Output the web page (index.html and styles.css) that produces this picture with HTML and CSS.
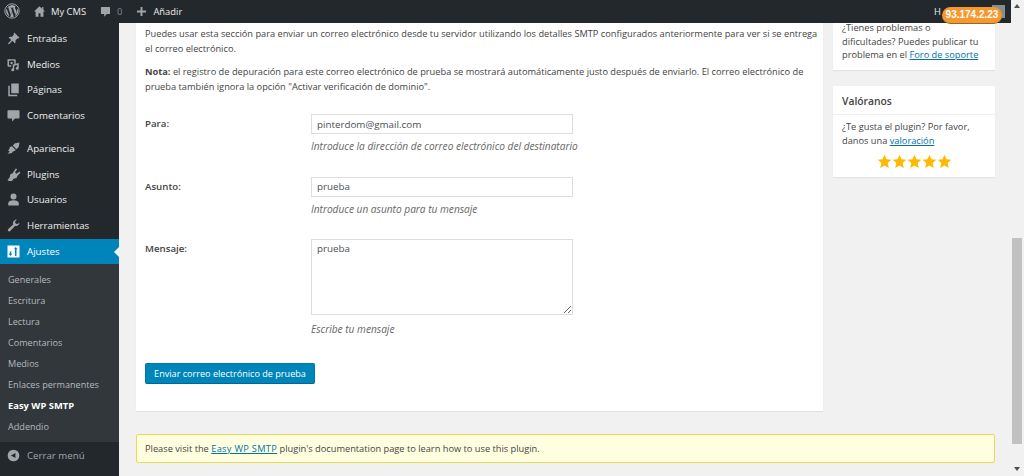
FILE: index.html
```html
<!DOCTYPE html>
<html lang="es">
<head>
<meta charset="utf-8">
<title>Easy WP SMTP</title>
<link rel="stylesheet" href="styles.css">
</head>
<body>
<div class="app">
  <header class="topbar">
    <div class="tb-item tb-wp"><svg class="wp" viewBox="0 0 20 20"><circle cx="10" cy="10" r="9" fill="none" stroke="currentColor" stroke-width="1.2"/><path fill="currentColor" d="M2.6 10c0 2.9 1.7 5.5 4.2 6.7L3.2 7a7.4 7.4 0 0 0-.6 3zm12.4-.4c0-.9-.3-1.6-.6-2.1-.4-.6-.7-1.100-.7-1.700 0-.7.5-1.300 1.200-1.300h.1A7.400 7.400 0 0 0 3.900 5.900h.5c.8 0 2-.1 2-.1.400 0 .5.600.1.600 0 0-.4.100-.9.100l2.800 8.300 1.700-5-1.200-3.300c-.4 0-.8-.1-.8-.1-.4 0-.4-.6 0-.6 0 0 1.300.1 2 .1.800 0 2-.1 2-.1.400 0 .5.600.1.600 0 0-.4.100-.9.100l2.800 8.200.8-2.600c.3-1.100.6-1.900.6-2.600zM10.100 10.700l-2.300 6.700a7.400 7.400 0 0 0 4.500-.1l-.1-.1zm6.500-4.300c0 .3.100.6.100.9 0 .8-.1 1.600-.6 2.800l-2.300 6.700a7.400 7.400 0 0 0 2.800-10.400z"/></svg></div>
    <div class="tb-item"><svg class="tb-icon" viewBox="0 0 20 20"><path fill="currentColor" d="M10 2 1.500 10H4v8h4.500v-5.500h3V18H16v-8h2.500L16 7.600V3h-2v2.700z"/></svg><span>My CMS</span></div>
    <div class="tb-item tb-dim"><svg class="tb-icon" viewBox="0 0 20 20"><path fill="currentColor" d="M4 3h12a1 1 0 0 1 1 1v9a1 1 0 0 1-1 1h-4l-4 4v-4H4a1 1 0 0 1-1-1V4a1 1 0 0 1 1-1z"/></svg><span>0</span></div>
    <div class="tb-item"><svg class="tb-icon" viewBox="0 0 20 20"><path fill="currentColor" d="M8.500 3h3v5.500H17v3h-5.500V17h-3v-5.500H3v-3h5.500z"/></svg><span>Añadir</span></div>
    <div class="tb-right"><span>H</span><span class="avatar"></span></div>
    <span class="ip-badge">93.174.2.23</span>
  </header>

  <nav class="sidebar">
    <ul class="menu">
      <li><svg viewBox="0 0 20 20"><path d="M11 2l7 7-1.500 1-1-.500-3 3c.5 1.500.2 3-.5 4L8.500 13 4 17.500 3 17l-.500-.500L7 12 3.500 8.500c1-.7 2.500-1 4-.5l3-3-.5-1z"/></svg>Entradas</li>
      <li><svg viewBox="0 0 20 20"><path d="M2 3h10l1 1v5h-2V5H9L8 3.500 7 5H4v6h3v2H3l-1-1zm7 7 8-2v7a2 2 0 1 1-2-2V10.500l-4 1V17a2 2 0 1 1-2-2z"/><circle cx="7.500" cy="8" r="1.600"/></svg>Medios</li>
      <li><svg viewBox="0 0 20 20"><path d="M7 2h10v13H7zM5 5v12h10v2H3V5z"/></svg>Páginas</li>
      <li class="sep-after"><svg viewBox="0 0 20 20"><path d="M3 3h14a1 1 0 0 1 1 1v9a1 1 0 0 1-1 1h-5l-4 4v-4H3a1 1 0 0 1-1-1V4a1 1 0 0 1 1-1z"/></svg>Comentarios</li>
      <li><svg viewBox="0 0 20 20"><path d="M12 3l6-1-1 6-3 3-5-5zM8 7l5 5-1 1c-1 0-2 1-3 1l-1 2-6 1 3-3-2-1 1-2c1-1 1-2 1-3z"/></svg>Apariencia</li>
      <li><svg viewBox="0 0 20 20"><path d="M13 2l2 1-3 4 2 2 4-3 1 2-4 4c0 2-1 3-2 3l-3 .500-2 3H4l-2-1 3-4 .5-3c0-1 1-2 3-2z"/></svg>Plugins</li>
      <li><svg viewBox="0 0 20 20"><circle cx="10" cy="6" r="4"/><path d="M3 18v-3c0-2.500 3-4 7-4s7 1.500 7 4v3z"/></svg>Usuarios</li>
      <li><svg viewBox="0 0 20 20"><path d="M18 6c0 3-3 5.500-6 4.500L6 17c-1 1.500-3 1-3.500-.5-.3-.8 0-1.500.5-2l6.500-6C8.500 5.500 11 2 14.500 2L12 5l1 2.500 2.500.5z"/></svg>Herramientas</li>
      <li class="active"><svg viewBox="0 0 20 20"><path fill-rule="evenodd" d="M2 2h16v16H2zm3 8v3H3.500L6 16l2.500-3H7v-3zm8-6-2.500 3H12v9h2V7h1.500z"/></svg>Ajustes</li>
    </ul>
    <ul class="submenu">
      <li>Generales</li>
      <li>Escritura</li>
      <li>Lectura</li>
      <li>Comentarios</li>
      <li>Medios</li>
      <li>Enlaces permanentes</li>
      <li class="current">Easy WP SMTP</li>
      <li>Addendio</li>
    </ul>
    <div class="collapse"><svg viewBox="0 0 20 20"><path fill-rule="evenodd" d="M10 1a9 9 0 1 1 0 18 9 9 0 0 1 0-18zm3 5-7 4 7 4z"/></svg>Cerrar menú</div>
  </nav>

  <main class="content">
    <div class="columns">
      <section class="panel">
        <p>Puedes usar esta sección para enviar un correo electrónico desde tu servidor utilizando los detalles SMTP configurados anteriormente para ver si se entrega el correo electrónico.</p>
        <p><strong>Nota:</strong> el registro de depuración para este correo electrónico de prueba se mostrará automáticamente justo después de enviarlo. El correo electrónico de prueba también ignora la opción "Activar verificación de dominio".</p>
        <form class="form">
          <div class="row">
            <label class="label">Para:</label>
            <div class="field"><input class="input" type="text" value="pinterdom@gmail.com"><p class="hint">Introduce la dirección de correo electrónico del destinatario</p></div>
          </div>
          <div class="row">
            <label class="label">Asunto:</label>
            <div class="field"><input class="input" type="text" value="prueba"><p class="hint">Introduce un asunto para tu mensaje</p></div>
          </div>
          <div class="row">
            <label class="label">Mensaje:</label>
            <div class="field"><textarea class="textarea">prueba</textarea><p class="hint">Escribe tu mensaje</p></div>
          </div>
          <button class="btn" type="button">Enviar correo electrónico de prueba</button>
        </form>
      </section>
      <aside class="aside">
        <div class="box box-support">¿Tienes problemas o dificultades? Puedes publicar tu problema en el <a href="#">Foro de soporte</a></div>
        <div class="box box-rate">
          <h3>Valóranos</h3>
          <div class="box-body">¿Te gusta el plugin? Por favor, danos una <a href="#">valoración</a>
            <div class="stars"><svg viewBox="0 0 20 20"><path d="M10 1l2.700 6 6.300.7-4.700 4.300 1.300 6.500L10 15.200 4.400 18.500 5.700 12 1 7.700 7.300 7z"/></svg><svg viewBox="0 0 20 20"><path d="M10 1l2.700 6 6.300.7-4.700 4.300 1.300 6.500L10 15.200 4.400 18.500 5.700 12 1 7.700 7.300 7z"/></svg><svg viewBox="0 0 20 20"><path d="M10 1l2.700 6 6.300.7-4.700 4.300 1.300 6.500L10 15.200 4.400 18.500 5.700 12 1 7.700 7.300 7z"/></svg><svg viewBox="0 0 20 20"><path d="M10 1l2.700 6 6.300.7-4.700 4.300 1.300 6.500L10 15.200 4.400 18.500 5.700 12 1 7.700 7.300 7z"/></svg><svg viewBox="0 0 20 20"><path d="M10 1l2.700 6 6.300.7-4.700 4.300 1.300 6.500L10 15.200 4.400 18.500 5.700 12 1 7.700 7.300 7z"/></svg></div>
          </div>
        </div>
      </aside>
    </div>
    <div class="notice">Please visit the <a href="#">Easy WP SMTP</a> plugin's documentation page to learn how to use this plugin.</div>
  </main>

  <div class="scrollbar"><span class="arrow"></span><span class="thumb"></span><span class="arrow-down"></span></div>
</div>
</body>
</html>
```

FILE: styles.css
```css
* { box-sizing: border-box; }
html, body { margin: 0; padding: 0; height: 476px; overflow: hidden; }
body { font-family: "Open Sans", sans-serif; font-size: 10px; color: #444; background: #f1f1f1; }
ul { list-style: none; margin: 0; padding: 0; }
a { color: #0073aa; text-decoration: underline; }

.app { display: grid; grid-template-columns: 119px 1fr 13px; grid-template-rows: 23px 453px; width: 1024px; height: 476px; position: relative; }

.topbar { grid-column: 1 / 3; display: flex; align-items: center; background: #23282d; color: #eee; font-size: 9.4px; height: 23px; position: relative; z-index: 2; padding-left: 4px; padding-bottom: 1px; }
.tb-item { display: flex; align-items: center; gap: 5px; margin-right: 13px; }
.tb-wp { margin-right: 13px; }
.wp { width: 16px; height: 16px; color: #a0a5aa; }
.tb-icon { width: 13px; height: 13px; color: #a0a5aa; }
.tb-dim span { color: #82878c; }
.tb-right { margin-left: auto; display: flex; align-items: center; gap: 2px; padding-right: 6px; }
.avatar { width: 13px; height: 13px; background: #8a8d90; display: block; margin-left: 49px; }
.ip-badge { position: absolute; top: 7px; left: 942px; width: 60px; height: 17px; border-radius: 9px; background: #f6982d; color: #fff; font-family: "Liberation Sans", sans-serif; font-weight: 700; font-size: 10px; line-height: 16px; text-align: center; border-bottom: 1px solid #8a6a35; }

.sidebar { grid-column: 1; grid-row: 2; background: #23282d; color: #eee; font-size: 9.7px; display: flex; flex-direction: column; }
.menu { padding-top: 2.500px; }
.menu li { display: flex; align-items: center; height: 25.700px; padding-left: 6px; position: relative; }
.menu li.sep-after { margin-bottom: 7.500px; }
.menu svg { width: 15px; height: 15px; margin-right: 6px; fill: #a0a5aa; flex: none; }
.menu li.active { background: #0085ba; color: #fff; }
.menu li.active svg { fill: #fff; }
.menu li.active::after { content: ""; position: absolute; right: 0; top: 8px; border: 5px solid transparent; border-right-color: #f1f1f1; border-left: 0; }
.submenu { background: #32373c; padding: 5px 0 0; flex: 1; color: #b4b9be; font-size: 9.100px; }
.submenu li { height: 21px; line-height: 21px; padding-left: 8px; }
.submenu li.current { color: #fff; font-weight: 700; font-size: 9.400px; }
.collapse { display: flex; align-items: center; height: 34px; padding: 0 0 8px 7px; color: #a0a5aa; background: #23282d; }
.collapse svg { width: 13px; height: 13px; margin-right: 7px; fill: #a0a5aa; }

.content { grid-column: 2; grid-row: 2; padding: 0 16px 0 17px; min-width: 0; }
.columns { display: flex; gap: 10px; align-items: flex-start; }
.panel { width: 687px; height: 388px; background: #fff; box-shadow: 0 1px 1px rgba(0,0,0,.06); padding: 3px 2px 0 9px; font-size: 9.250px; line-height: 15px; }
.panel > p { margin: 0 0 8px; }
.form { margin-top: 20px; }
.row { display: flex; margin-bottom: 22.500px; font-size: 9.700px; }
.label { width: 166px; font-weight: 600; padding-top: 2px; }
.field { width: 470px; }
.input { display: block; width: 262px; height: 20px; border: 1px solid #ddd; padding: 0 5px; font: 9.800px "Open Sans", sans-serif; color: #4a4f54; outline: 0; border-radius: 0; }
.textarea { display: block; width: 262px; height: 76px; margin-bottom: 7px; border: 1px solid #ddd; padding: 2px 5px; font: 9.800px "Open Sans", sans-serif; color: #4a4f54; outline: 0; resize: both; }
.hint { margin: 5px 0 0; font-style: italic; color: #666; font-size: 10.130px; }
.textarea + .hint { margin-top: 0; }
.btn { display: block; height: 21px; width: 170px; margin-top: 26px; padding: 0; background: #0085ba; border: 1px solid #0079a8; border-bottom-color: #006799; border-radius: 2px; color: #fff; font: 9.100px "Open Sans", sans-serif; }

.aside { width: 162px; font-size: 9.250px; line-height: 13.500px; }
.box { background: #fff; box-shadow: 0 1px 1px rgba(0,0,0,.06); }
.box-support { padding: 0 9px; height: 48.500px; margin: -2px 0 16px; }
.box-rate h3 { margin: 0; font-size: 10.300px; font-weight: 600; height: 29px; line-height: 30px; padding: 0 9px; border-bottom: 1px solid #eee; }
.box-body { padding: 5.500px 9px 8px; }
.stars { display: flex; justify-content: center; margin-top: 6.500px; }
.stars svg { width: 15px; height: 15px; fill: #ffb900; }

.notice { margin-top: 23px; width: 859px; height: 29px; background: #ffffe0; border: 1px solid #e6db55; border-radius: 2px; padding: 0 8px; line-height: 27px; font-size: 9.250px; }
.notice a { letter-spacing: .3px; }

.scrollbar { grid-column: 3; grid-row: 1 / 3; background: #f1f1f1; position: relative; }
.arrow { position: absolute; top: 4px; left: 3px; border: 3.500px solid transparent; border-top: 0; border-bottom: 4px solid #505050; }
.arrow-down { position: absolute; top: 467px; left: 3px; border: 3.500px solid transparent; border-bottom: 0; border-top: 4px solid #505050; }
.thumb { position: absolute; top: 238px; left: 1px; width: 10px; height: 206px; background: #c1c1c1; }
```
